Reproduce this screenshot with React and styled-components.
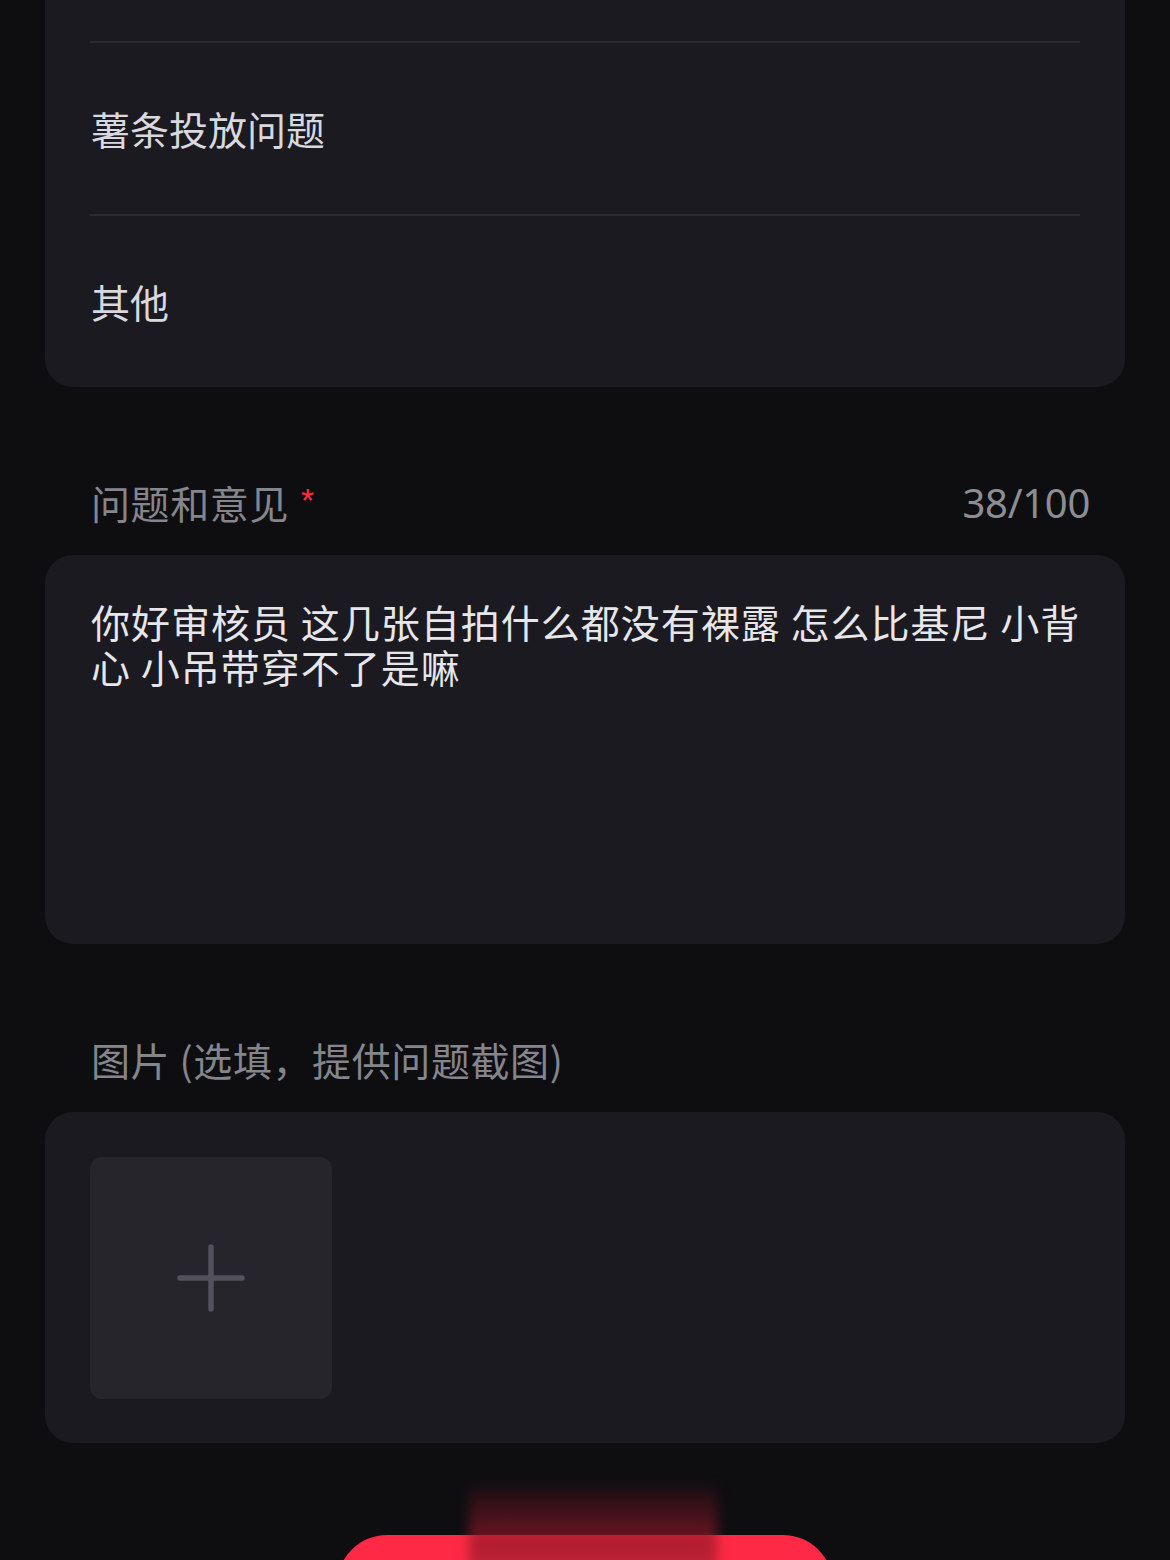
import React from 'react';
import styled, { createGlobalStyle } from 'styled-components';

const GlobalStyle = createGlobalStyle`
  html, body {
    margin: 0;
    padding: 0;
    background: #0e0e11;
  }
  body {
    font-family: "Noto Sans CJK SC", "Noto Sans", sans-serif;
    overflow: hidden;
  }
`;

const reasons = ['', '薯条投放问题', '其他'];

const App = () => {
  return (
    <Page>
      <GlobalStyle />

      <Card $top="-132px">
        {reasons.map((text, i) => (
          <ReasonRow key={i} $first={i === 0}>{text}</ReasonRow>
        ))}
      </Card>

      <SectionHead>
        <Label>
          问题和意见<Required>*</Required>
        </Label>
        <Counter>38/100</Counter>
      </SectionHead>

      <TextBox>
        你好审核员 这几张自拍什么都没有裸露 怎么比基尼 小背心 小吊带穿不了是嘛
      </TextBox>

      <SectionHead>
        <Label>图片 (选填，提供问题截图)</Label>
      </SectionHead>

      <Card>
        <UploadArea>
          <UploadTile>
            <svg width="68" height="68" viewBox="0 0 68 68" fill="none">
              <path d="M34 3v62M3 34h62" stroke="#53525b" strokeWidth="5.5" strokeLinecap="round" />
            </svg>
          </UploadTile>
        </UploadArea>
      </Card>

      <Footer>
        <SubmitButton>
          <Glow />
        </SubmitButton>
      </Footer>
    </Page>
  );
};

const Page = styled.div`
  width: 1170px;
  height: 1560px;
  box-sizing: border-box;
  padding: 0 45px;
  display: flex;
  flex-direction: column;
  overflow: hidden;
  background: #0e0e11;
`;

const Card = styled.div`
  margin-top: ${p => p.$top || '0'};
  background: #1b1a20;
  border-radius: 28px;
  padding: 0 45px;
  flex-shrink: 0;
`;

const ReasonRow = styled.div`
  height: 173px;
  box-sizing: border-box;
  display: flex;
  align-items: center;
  border-top: ${p => (p.$first ? 'none' : '2px solid #2a2a30')};
  font-size: 39px;
  font-weight: 400;
  color: #d8d8de;
  padding-left: 1px;
  padding-bottom: 2px;
`;

const SectionHead = styled.div`
  display: flex;
  justify-content: space-between;
  align-items: center;
  margin-top: 90px;
  margin-bottom: 28px;
  padding: 0 35px 0 46px;
  height: 50px;
`;

const Label = styled.div`
  font-size: 39px;
  font-weight: 400;
  letter-spacing: 0.6px;
  color: #85858d;
  display: flex;
  align-items: center;
`;

const Required = styled.span`
  color: #ff2b48;
  font-family: "Liberation Sans", sans-serif;
  font-size: 34px;
  margin-left: 12px;
  margin-top: -4px;
`;

const Counter = styled.div`
  font-family: "Noto Sans", "Liberation Sans", sans-serif;
  font-size: 40px;
  font-weight: 400;
  color: #8d8d95;
  letter-spacing: -0.3px;
`;

const TextBox = styled.div`
  height: 389px;
  box-sizing: border-box;
  background: #1b1a20;
  border-radius: 28px;
  padding: 44px 40px 0 46px;
  font-size: 39px;
  line-height: 45px;
  letter-spacing: 1px;
  color: #e6e6eb;
  flex-shrink: 0;
`;

const UploadArea = styled.div`
  height: 331px;
  display: flex;
  align-items: center;
`;

const UploadTile = styled.div`
  width: 242px;
  height: 242px;
  border-radius: 12px;
  background: #26252c;
  display: flex;
  align-items: center;
  justify-content: center;
`;

const Footer = styled.div`
  margin-top: 92px;
  display: flex;
  justify-content: center;
`;

const SubmitButton = styled.div`
  position: relative;
  width: 496px;
  height: 100px;
  border-radius: 50px;
  background: #fe2a45;
  flex-shrink: 0;
`;

const Glow = styled.div`
  position: absolute;
  left: 132px;
  top: -50px;
  width: 248px;
  height: 110px;
  background: linear-gradient(to bottom, rgba(110, 20, 32, 0.1), rgba(150, 25, 42, 0.75) 55%, rgba(200, 32, 55, 0.6));
  filter: blur(6px);
`;

export default App;
